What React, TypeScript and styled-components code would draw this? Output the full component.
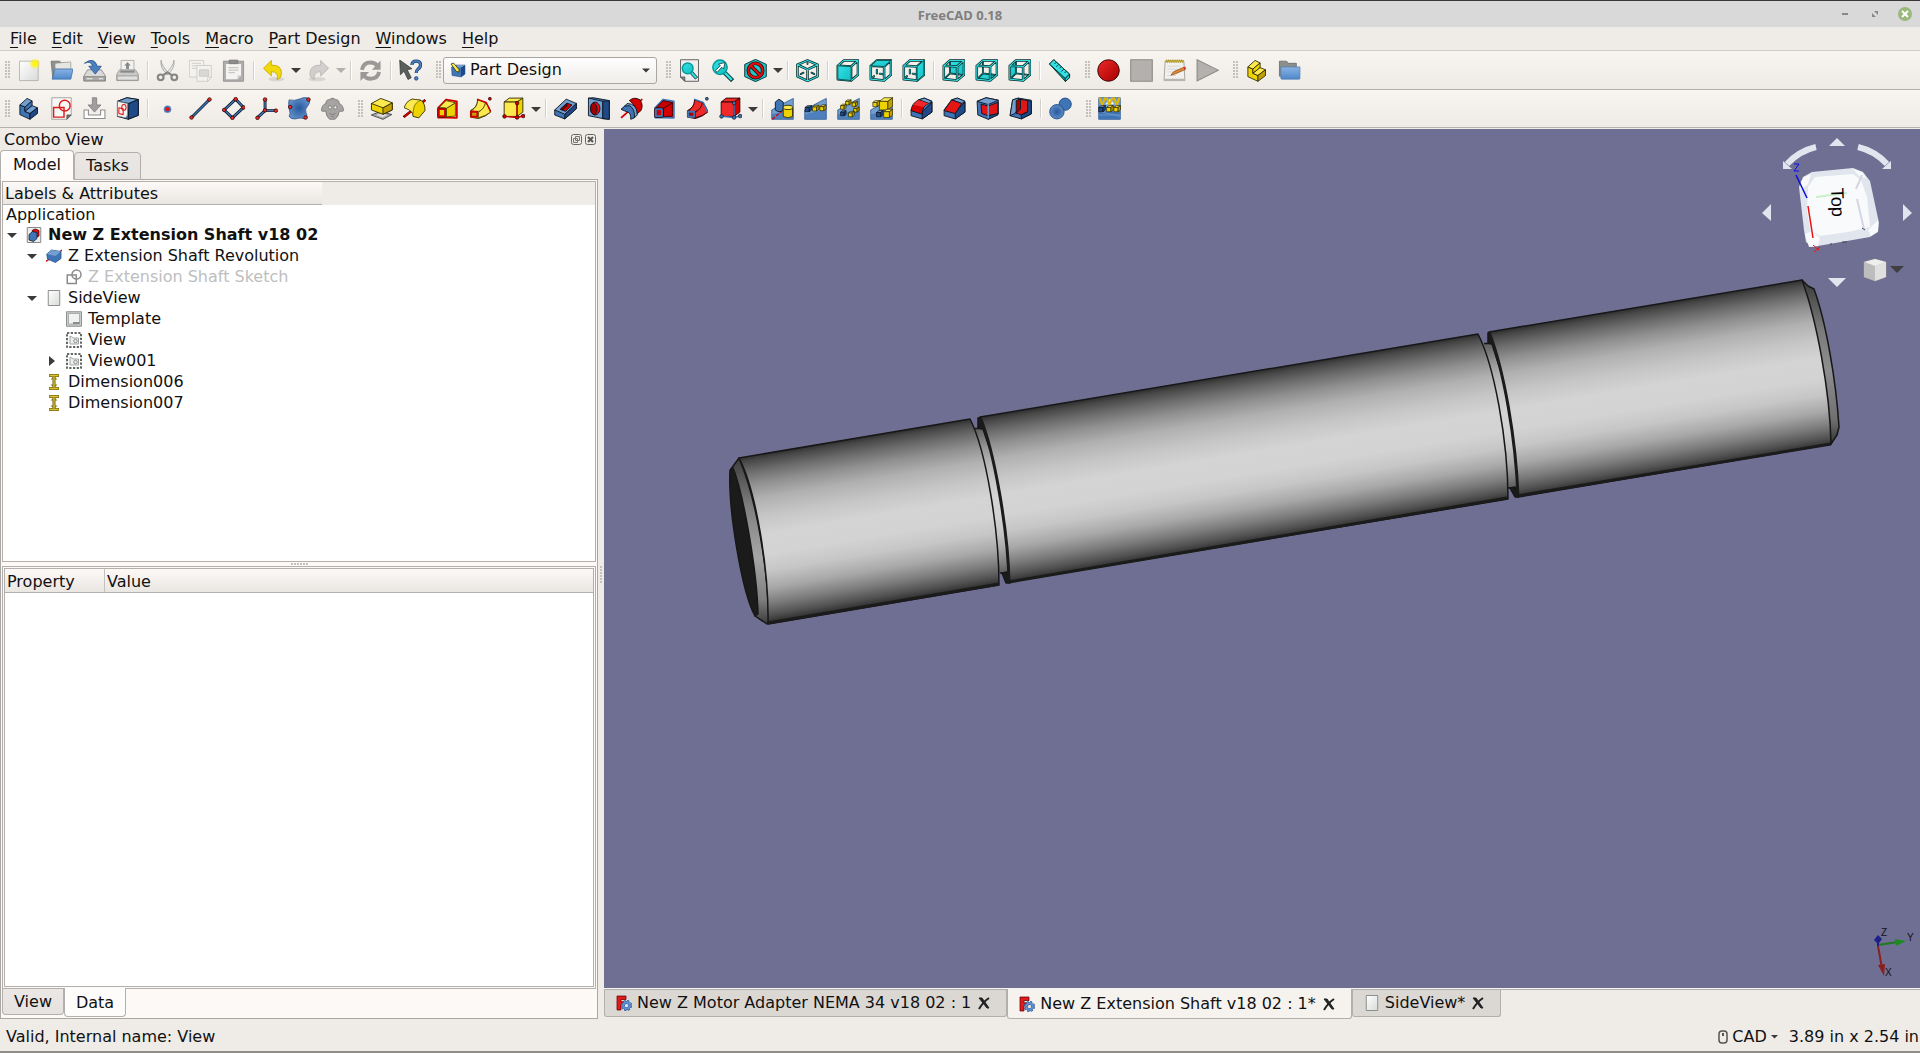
import React from "react";
import styled, { createGlobalStyle, css } from "styled-components";

const Global = createGlobalStyle`
  * { box-sizing: border-box; }
  html, body, #root { height: 100%; margin: 0; }
  body { font: 16px/20px "DejaVu Sans", sans-serif; color: #111; background: #efebe7; overflow: hidden; }
  button, select, input { font: inherit; color: inherit; }
  button { background: none; border: 0; padding: 0; margin: 0; }
  ul { list-style: none; margin: 0; padding: 0; }
`;

/* ---------- colours used by the icon set ---------- */
const BLUE = { hi: "#729fcf", mid: "#3f74b5", lo: "#204a87", line: "#0b1521" };
const GOLD = { hi: "#fce94f", mid: "#edd400", lo: "#c4a000", line: "#302b00" };
const RED = { hi: "#ef2929", mid: "#d40000", lo: "#a40000", line: "#280000" };
const CYAN = { hi: "#34e0e2", mid: "#1fc5c8", lo: "#06989a", line: "#042a2a" };
type Tone = typeof BLUE;

/* ---------- drawing helpers ---------- */
const Wire = ({ d, tone = CYAN, w = 4 }: { d: string; tone?: Tone; w?: number }) => (
  <g fill="none" strokeLinejoin="round" strokeLinecap="round">
    <path d={d} stroke={tone.line} strokeWidth={w + 4} />
    <path d={d} stroke={tone.hi} strokeWidth={w} />
  </g>
);

const Block = ({ x, y, s, t }: { x: number; y: number; s: number; t: Tone }) => {
  const k = s * 0.3;
  return (
    <g stroke={t.line} strokeWidth="2" strokeLinejoin="round">
      <path fill={t.hi} d={`M${x} ${y + k}l${k * 1.3} ${-k}h${s - k}l${-k * 1.3} ${k}z`} />
      <path fill={t.mid} d={`M${x} ${y + k}h${s - k}v${s - k}h${k - s}z`} />
      <path fill={t.lo} d={`M${x + s - k} ${y + k}l${k * 1.3} ${-k}v${s - k}l${-k * 1.3} ${k}z`} />
    </g>
  );
};

const Dot = ({ x, y, r = 5, fill = "#ef2929", line = "#280000" }: { x: number; y: number; r?: number; fill?: string; line?: string }) => (
  <circle cx={x} cy={y} r={r} fill={fill} stroke={line} strokeWidth="2" />
);

const Steps = ({ t }: { t: Tone }) => (
  <g stroke={t.line} strokeWidth="2.5" strokeLinejoin="round">
    <path fill={t.mid} d="M8 22l14 6v12l14 6v16L8 49z" />
    <path fill={t.hi} d="M8 22L28 4l14 7-20 17z" />
    <path fill={t.mid} d="M22 28l20-17v13L22 40z" />
    <path fill={t.hi} d="M22 40l20-16 15 6-21 16z" />
    <path fill={t.lo} d="M36 46l21-16v16L36 62z" />
  </g>
);

const FACES = {
  front: "M5 19L42 21V60L5 56z",
  top: "M5 19L22 4H61L42 21z",
  right: "M42 21L61 4V44L42 60z",
  rear: "M22 4H61V44L22 40z",
  bottom: "M5 56L22 40L61 44L42 60z",
  left: "M5 19L22 4V40L5 56z",
};
const ViewCube = ({ face }: { face: keyof typeof FACES }) => {
  const hidden = face === "rear" || face === "bottom" || face === "left";
  return (
    <g>
      {hidden && <path d={FACES[face]} fill="url(#gCyan)" stroke={CYAN.line} strokeWidth="2" />}
      {!hidden && face !== "front" && <Wire w={2} d="M22 30v10M14 48l-5 5M30 41l8 1" />}
      {hidden && <Wire w={1} d="M22 8v32l-14 14M22 40l34 4" />}
      <Wire w={3} d="M5 19L42 21V60L5 56zM5 19L22 4H61V44L42 60M42 21L61 4" />
      {!hidden && <path d={FACES[face]} fill="url(#gCyan)" stroke={CYAN.line} strokeWidth="2" />}
    </g>
  );
};

const Feature = ({ kind, t, e }: { kind: "revolve" | "loft" | "pipe" | "prim"; t: Tone; e: Tone }) => {
  if (kind === "loft")
    return (
      <g strokeLinejoin="round">
        <path d="M6 30L28 7 58 12V58L28 57H6z" fill={t.hi} stroke={e.mid} strokeWidth="5" />
        <path d="M28 32L54 16v37L28 55z" fill={t.mid} stroke={t.line} strokeWidth="2" />
        <path d="M8 30L28 10l26 6-26 16z" fill={t.hi} stroke={t.line} strokeWidth="2" />
        <path d="M8 34h17v19H8z" fill={t.mid} stroke={t.line} strokeWidth="9" />
        <path d="M8 34h17v19H8z" fill={t.mid} stroke={e.mid} strokeWidth="5" />
      </g>
    );
  if (kind === "pipe")
    return (
      <g strokeLinejoin="round">
        <path d="M24 8l22 8q14 16 14 26-12 12-34 18L4 56V38Q24 28 24 8z" fill={t.mid} stroke={t.line} strokeWidth="2.500" />
        <path d="M24 8l22 8Q44 34 24 42L6 38Q24 28 24 8z" fill={t.hi} stroke={t.line} strokeWidth="2" />
        <path d="M46 16Q42 34 26 42v16q22-6 34-16Q56 26 46 16z" fill={t.hi} stroke={t.line} strokeWidth="2" />
        <path d="M22 6l26 9 12 26" fill="none" stroke={e.mid} strokeWidth="4" />
        <path d="M6 41h17v14H6z" fill={t.lo} stroke={e.mid} strokeWidth="5" />
        <Dot x={58} y={5} r={4} fill={e.mid} line={e.line} />
      </g>
    );
  if (kind === "prim")
    return (
      <g strokeLinejoin="round">
        <path d="M6 14L20 3H58L42 14z" fill={t.hi} stroke={t.line} strokeWidth="2.5" />
        <path d="M6 14H42V54H6z" fill={t.hi} stroke={t.line} strokeWidth="2.5" />
        <path d="M42 14L58 3V42L42 54z" fill={t.mid} stroke={t.line} strokeWidth="2.5" />
        <path d="M42 18V56M7 54l35 3 17-4" fill="none" stroke={e.mid} strokeWidth="4" />
        <Dot x={42} y={17} fill={e.mid} line={e.line} /><Dot x={7} y={54} fill={e.mid} line={e.line} />
        <Dot x={42} y={57} fill={e.mid} line={e.line} /><Dot x={59} y={53} fill={e.mid} line={e.line} />
      </g>
    );
  return (
    <g strokeLinejoin="round">
      <path d="M2 56L62 8" stroke={RED.line} strokeWidth="7" />
      <path d="M3 55L61 9" stroke={e.mid} strokeWidth="5" />
      <path d="M4 30Q8 12 26 6L50 9Q62 18 61 38L44 58 28 54Q28 36 4 30z" fill={t.mid} stroke={t.line} strokeWidth="2.500" />
      <path d="M4 30Q8 12 26 6L50 9Q34 14 30 30 28 40 28 46 20 34 4 30z" fill={t.hi} stroke={t.line} strokeWidth="1.500" />
    </g>
  );
};

const Slab = ({ children }: { children: React.ReactNode }) => (
  <g>
    <path d="M2 62V36L46 12 62 4V62z" fill={BLUE.hi} stroke={BLUE.lo} strokeWidth="2" />
    <path d="M2 62V48L62 34V62z" fill={BLUE.mid} opacity="0.7" />
    {children}
  </g>
);

const Dress = ({ children }: { children: React.ReactNode }) => (
  <g strokeLinejoin="round" stroke={BLUE.line} strokeWidth="2.5">
    <path d="M3 36L24 8 40 3 61 12V42L34 61 3 52z" fill={BLUE.mid} />
    <path d="M24 8l16-5 21 9-9 6z" fill={BLUE.hi} />
    <path d="M34 61V42L61 14v28z" fill={BLUE.lo} />
    {children}
  </g>
);

const ICONS: Record<string, React.ReactNode> = {
  new: <g><path d="M7 6h52v54H7z" fill="url(#gPage)" stroke="#a5a5a0" strokeWidth="2" /><circle cx="50" cy="13" r="14" fill="#fff200" opacity=".45" /><circle cx="50" cy="13" r="8" fill="#fff41a" /></g>,
  open: <g><path d="M3 6h24l4 5h26v14H12L8 56z" fill="#8e908c" stroke="#6b6d69" strokeWidth="2" /><path d="M14 12l44-4v20H14z" fill="#e6e6e3" stroke="#888" strokeWidth="1.5" /><path d="M14 28h50l-6 28H6z" fill="url(#gFolder)" stroke="#3a6fae" strokeWidth="2" /></g>,
  save: <g><path d="M13 30h38l12 18v13H2V48z" fill="#d9dad8" stroke="#777" strokeWidth="2" /><path d="M3 49h59v12H3z" fill="#a9aaa7" stroke="#777" strokeWidth="2" /><path d="M10 55h16M44 55h12" stroke="#eee" strokeWidth="3" /><path d="M4 12Q30-8 40 20h11L34 42 16 20h11Q22 4 4 12z" fill="#4a7fc0" stroke="#204a87" strokeWidth="2" /></g>,
  print: <g><path d="M14 4h36v30H14z" fill="#f1f1f0" stroke="#999" strokeWidth="2" /><path d="M32 8l9 10h-5v10h-8V18h-5z" fill="#888" /><path d="M10 30h44l8 12v18H2V42z" fill="#c9cac8" stroke="#909090" strokeWidth="2" /><path d="M12 32h40v6H12z" fill="#8a8a8a" /><path d="M3 47h58v12H3z" fill="#e0e0de" stroke="#8a8a8a" strokeWidth="2" /></g>,
  cut: <g fill="none"><path d="M14 3q2 18 24 38l-6 2Q10 26 14 3z" fill="#ddd" stroke="#999" strokeWidth="2" /><path d="M50 3q-2 18-24 38l6 2Q54 26 50 3z" fill="#e8e8e6" stroke="#999" strokeWidth="2" /><circle cx="13" cy="51" r="8" stroke="#868686" strokeWidth="6" /><circle cx="51" cy="51" r="8" stroke="#868686" strokeWidth="6" /><path d="M20 45l12-8 12 8" stroke="#868686" strokeWidth="6" /></g>,
  copy: <g fill="#f3f2ef" stroke="#c3c1be" strokeWidth="2"><path d="M1 4h40v46H1z" /><path d="M8 12h26M8 19h26M8 26h12" /><path d="M22 18h40v32L52 62H22z" /><path d="M29 30h26v18H29z" fill="#d9d8d5" /><path d="M52 62V51h10z" fill="#fff" /></g>,
  paste: <g><path d="M4 6h56v56H4z" fill="#aeadab" stroke="#858482" strokeWidth="2" /><path d="M11 14h42v32L43 56H11z" fill="#f4f3f1" /><path d="M18 24h28M18 31h28M18 38h18" stroke="#c8c7c4" strokeWidth="3" /><path d="M43 56V46h10z" fill="#ccc" /><path d="M20 3h24v10H20z" fill="#8d8c8a" stroke="#777" strokeWidth="2" /></g>,
  undo: <g><ellipse cx="40" cy="56" rx="22" ry="6" fill="#000" opacity=".1" /><path d="M4 26L26 4v13Q56 16 54 42 53 54 42 58 48 36 26 35V47z" fill="#f2d90e" stroke="#c9ab00" strokeWidth="2.5" /></g>,
  redo: <g opacity=".8"><ellipse cx="28" cy="56" rx="24" ry="6" fill="#000" opacity=".12" /><path d="M60 26L38 4v13Q8 16 8 42 9 54 20 58 16 36 38 35V47z" fill="#c9c8c6" stroke="#aaa9a7" strokeWidth="2.5" /></g>,
  refresh: <g fill="none" stroke="#9a9997" strokeWidth="11"><path d="M8 30Q12 10 32 10q12 0 18 8" /><path d="M56 36Q52 55 32 55q-12 0-18-8" /><path d="M60 4v26H36z" fill="#9a9997" stroke="none" /><path d="M4 61V36h24z" fill="#9a9997" stroke="none" /></g>,
  help: <g><path d="M2 3l34 24-13 3 11 22-9 5-11-23L4 44z" fill="#5b605c" stroke="#333" strokeWidth="2" /><path d="M36 17Q36 6 48 6t12 11q0 7-8 12-4 3-4 10" fill="none" stroke="#173c70" strokeWidth="9" /><path d="M36 17Q36 6 48 6t12 11q0 7-8 12-4 3-4 10" fill="none" stroke="#4a80c0" strokeWidth="5" /><circle cx="48" cy="54" r="5" fill="#4a80c0" stroke="#173c70" strokeWidth="2" /></g>,
  fitAll: <g><path d="M7 2h50v60H19L7 50z" fill="#eee" stroke="#555" strokeWidth="2.5" /><path d="M7 50h12v12z" fill="#888" stroke="#444" strokeWidth="2" /><path d="M36 36l16 18" stroke={CYAN.line} strokeWidth="10" /><path d="M36 36l15 17" stroke={CYAN.hi} strokeWidth="6" /><circle cx="27" cy="26" r="15" fill="url(#gCyan)" stroke={CYAN.lo} strokeWidth="4" /></g>,
  fitSel: <g><path d="M34 34l26 26" stroke={CYAN.line} strokeWidth="12" /><path d="M34 34l24 24" stroke={CYAN.hi} strokeWidth="7" /><circle cx="25" cy="23" r="20" fill="url(#gCyan)" stroke={CYAN.lo} strokeWidth="4" /><path d="M12 32l14-13-5-5 18-4-4 18-5-5-13 14z" fill="#fff" stroke={CYAN.line} strokeWidth="2" /></g>,
  drawStyle: <g><path d="M32 1l30 14v34L32 63 2 49V15z" fill={CYAN.mid} stroke={CYAN.line} strokeWidth="2.5" /><circle cx="32" cy="32" r="20" fill="none" stroke="#280000" strokeWidth="10" /><path d="M18 18l28 28" stroke="#280000" strokeWidth="10" /><circle cx="32" cy="32" r="20" fill="none" stroke="#e01010" strokeWidth="6" /><path d="M18 18l28 28" stroke="#e01010" strokeWidth="6" /></g>,
  iso: <g><Wire w={1} d="M32 6v8M13 42l8-4M51 42l-8-4" /><Wire w={3} d="M32 4l28 12v32L32 61 4 48V16zM4 16l28 13 28-13M32 29v31" /></g>,
  front: <ViewCube face="front" />, top: <ViewCube face="top" />, right: <ViewCube face="right" />,
  rear: <ViewCube face="rear" />, bottom: <ViewCube face="bottom" />, left: <ViewCube face="left" />,
  measure: <g stroke={CYAN.line} strokeWidth="2.5" strokeLinejoin="round"><path d="M4 14L16 2 60 42v10L48 62z" fill={CYAN.lo} /><path d="M4 14L16 2 60 42 48 54z" fill={CYAN.hi} /><path d="M48 54v9l12-11V42z" fill={CYAN.mid} /><path d="M23 9l-5 5M30 15l-7 7M37 21l-5 5M44 28l-7 7M51 34l-5 5" /></g>,
  record: <circle cx="32" cy="32" r="30" fill="url(#gRed)" stroke="#2b0000" strokeWidth="2.5" />,
  stop: <path d="M2 2h60v60H2z" fill="#b3b0ad" stroke="#8c8a87" strokeWidth="3" />,
  macro: <g><path d="M6 6h52l3 54H3z" fill="#f2f1ee" stroke="#888" strokeWidth="2" /><path d="M3 55h58v6H3z" fill="#b6b6b3" /><path d="M8 3h48v6H8z" fill="#c9b037" stroke="#7a6a10" strokeWidth="2" strokeDasharray="3 3" /><path d="M12 20h36M12 28h28M12 36h18M12 46h24" stroke="#ccc" strokeWidth="2" /><path d="M22 45l8-10 28-12 4 6-27 12z" fill="#e08a3a" stroke="#8a4a10" strokeWidth="2" /><path d="M57 23l5-2 2 6-4 3z" fill="#c33" /></g>,
  play: <path d="M3 2L62 31 3 61z" fill="#b3b0ad" stroke="#8c8a87" strokeWidth="3" />,
  part: <Steps t={GOLD} />,
  group: <g><path d="M4 6h20l5 6h22v36H4z" fill="#8d8f8c" stroke="#5f615e" strokeWidth="2" /><path d="M8 22h53v32q0 2-2 2H11q-3 0-3-2z" fill="url(#gFolder)" stroke="#4b7ab0" strokeWidth="2" /></g>,
  partDesign: <g><path d="M6 20l20-8h34v36L44 60 8 54z" fill={BLUE.mid} stroke={BLUE.lo} strokeWidth="2" /><path d="M44 22l16-10v36L44 60z" fill={BLUE.lo} /><path d="M26 12h34l-16 10H30z" fill={BLUE.hi} /><path d="M4 8l10-4 22 26v10l-10-2z" fill={GOLD.hi} stroke={GOLD.line} strokeWidth="3" /></g>,
  body: <Steps t={BLUE} />,
  sketch: <g><path d="M5 2h54v48L47 62H5z" fill="#f7f7f5" stroke="#888" strokeWidth="2" /><path d="M47 62V50h12z" fill="#777" stroke="#444" strokeWidth="2" /><path d="M10 29h29v27H10z" fill="none" stroke="#e01b1b" strokeWidth="4" /><circle cx="41" cy="24" r="15" fill="none" stroke="#e01b1b" strokeWidth="4" /></g>,
  importSk: <g><path d="M3 36h12v14h34V36h12v24H3z" fill="#fff" stroke="#8e8d8b" strokeWidth="3" /><path d="M26 2h12v20h12L32 42 14 22h12z" fill="#a09f9d" stroke="#777" strokeWidth="2" /></g>,
  mapSk: <g strokeLinejoin="round"><path d="M4 12L30 2l32 5v44L34 62 4 54z" fill={BLUE.mid} stroke={BLUE.line} strokeWidth="2.5" /><path d="M4 12L30 2l32 5-26 11z" fill={BLUE.hi} stroke={BLUE.line} strokeWidth="2.5" /><path d="M36 18L62 7v44L34 62z" fill={BLUE.lo} stroke={BLUE.line} strokeWidth="2.5" /><path d="M4 12l28 6v32l-5 8-23-5z" fill="#f3f3f1" stroke="#777" strokeWidth="2" /><path d="M8 30l12 3v16L8 46z" fill="none" stroke="#e01b1b" strokeWidth="3" /><ellipse cx="22" cy="29" rx="6" ry="8" fill="none" stroke="#e01b1b" strokeWidth="3" /></g>,
  point: <g><circle cx="32" cy="34" r="10" fill={BLUE.mid} stroke={BLUE.hi} strokeWidth="1.5" /><circle cx="32" cy="34" r="5.5" fill="#e81010" /></g>,
  line: <g><Wire tone={{ ...BLUE, hi: BLUE.mid }} w={4} d="M7 57L57 7" /><Dot x={7} y={57} /><Dot x={57} y={7} /></g>,
  plane: <g><Wire tone={{ ...BLUE, hi: BLUE.mid }} w={4} d="M38 6L6 36 29 58 60 29z" /><Dot x={38} y={6} /><Dot x={6} y={36} /><Dot x={29} y={58} /><Dot x={60} y={29} /></g>,
  axes: <g><Wire tone={{ ...BLUE, hi: BLUE.mid }} w={4} d="M28 7v31L6 58M28 38h30" /><Dot x={28} y={7} /><Dot x={28} y={37} /><Dot x={7} y={58} /><Dot x={58} y={38} /></g>,
  binder: <g><path d="M3 8Q18 12 34 5T60 6Q62 18 54 26T50 44Q56 56 48 61 34 56 20 61 8 62 3 54 8 46 4 36 0 20 3 8z" fill="url(#gBlue)" stroke={BLUE.lo} strokeWidth="2" /><Dot x={57} y={7} /><Dot x={6} y={28} /><Dot x={49} y={57} /></g>,
  clone: <g stroke="#6f6e6c" strokeWidth="2"><path d="M1 38Q3 20 14 18 12 8 24 7q8-8 16 0 12 1 10 11 11 2 13 20-4 4-12 1-1 14-12 23H24Q14 54 13 39 5 42 1 38z" fill="#a5a4a2" /><circle cx="25" cy="29" r="4.500" fill="#e8e8e6" /><circle cx="40" cy="29" r="4.500" fill="#e8e8e6" /><path d="M24 46q8 6 16 0M30 54h5" fill="none" /></g>,
  pad: <g strokeLinejoin="round"><path d="M4 50l26-10 30 9-24 13z" fill="#ddd" stroke="#555" strokeWidth="3" /><path d="M12 50l20-6 20 6-17 8z" fill="none" stroke="#888" strokeWidth="2" /><path d="M4 18v18l32 12 26-12V18z" fill={GOLD.mid} stroke={GOLD.line} strokeWidth="2.5" /><path d="M36 30v18l26-12V16z" fill={GOLD.lo} stroke={GOLD.line} strokeWidth="2.5" /><path d="M4 18L30 4l32 12-26 14z" fill={GOLD.hi} stroke={GOLD.line} strokeWidth="2.5" /></g>,
  revolve: <Feature kind="revolve" t={GOLD} e={RED} />, loft: <Feature kind="loft" t={GOLD} e={RED} />,
  pipe: <Feature kind="pipe" t={GOLD} e={RED} />, addPrim: <Feature kind="prim" t={GOLD} e={RED} />,
  pocket: <g strokeLinejoin="round" stroke={BLUE.line} strokeWidth="2.5"><path d="M2 36v14l28 11 32-28V18z" fill={BLUE.mid} /><path d="M30 48v13l32-28V18z" fill={BLUE.lo} /><path d="M2 36L34 6l28 12-32 30z" fill={BLUE.hi} /><path d="M18 34l18-17 14 5-18 18z" fill="#d40000" /><path d="M18 34l18-17v9L22 36z" fill="#8a0000" /></g>,
  hole: <g strokeLinejoin="round" stroke={BLUE.line} strokeWidth="2.5"><path d="M4 3l14-1 44 8v52L42 60z" fill={BLUE.mid} /><path d="M4 3l40 9v48L4 52z" fill={BLUE.hi} /><path d="M44 12l18-2v52l-18-2z" fill={BLUE.lo} /><ellipse cx="23" cy="32" rx="13" ry="18" fill="#e01010" /><path d="M18 15q18 14 4 35-12-2-12-18 0-14 8-17z" fill="#a00000" /></g>,
  grooveI: <g strokeLinejoin="round"><path d="M3 58L62 6" stroke="#d40000" strokeWidth="5" /><path d="M26 10Q40-2 56 8 66 24 58 38L46 48Q46 24 26 10z" fill="#d40000" stroke={RED.line} strokeWidth="2.5" /><path d="M20 18Q48 18 48 50L40 58Q38 30 12 26z" fill={BLUE.hi} stroke={BLUE.line} strokeWidth="2.500" /><path d="M3 34Q12 22 26 24 42 32 40 58L30 62Q30 44 22 42 10 38 3 34z" fill={BLUE.mid} stroke={BLUE.line} strokeWidth="2.500" /></g>,
  subLoft: <Feature kind="loft" t={{ ...RED, hi: "#c40000" }} e={BLUE} />, subPipe: <Feature kind="pipe" t={RED} e={BLUE} />,
  subPrim: <Feature kind="prim" t={RED} e={BLUE} />,
  mirror: <Slab><path d="M4 62L38 32" stroke="#d40000" strokeWidth="4" strokeDasharray="9 5" /><path d="M12 14l10-8 12 8v22q-10 10-22 0z" fill={BLUE.mid} stroke={BLUE.line} strokeWidth="2.500" /><path d="M34 30v24q13 8 26 0V30z" fill={GOLD.mid} stroke={GOLD.line} strokeWidth="2.500" /><ellipse cx="47" cy="29" rx="13" ry="6" fill={GOLD.hi} stroke={GOLD.line} strokeWidth="2.500" /></Slab>,
  linear: <Slab><Block x={3} y={24} s={17} t={{ ...BLUE, hi: BLUE.mid, mid: BLUE.lo }} /><Block x={24} y={23} s={16} t={GOLD} /><Block x={44} y={22} s={16} t={GOLD} /></Slab>,
  polar: <Slab><Block x={24} y={8} s={14} t={GOLD} /><Block x={42} y={12} s={14} t={GOLD} /><Block x={10} y={20} s={14} t={GOLD} /><Block x={46} y={28} s={14} t={GOLD} /><Block x={10} y={38} s={14} t={{ ...BLUE, mid: BLUE.lo }} /><Block x={32} y={40} s={15} t={GOLD} /></Slab>,
  multi: <Slab><Block x={26} y={2} s={34} t={GOLD} /><Block x={8} y={10} s={17} t={GOLD} /><Block x={18} y={38} s={17} t={{ ...BLUE, mid: BLUE.lo }} /><Block x={38} y={34} s={23} t={GOLD} /></Slab>,
  fillet: <Dress><path d="M3 38Q4 18 24 8l28 10Q34 24 34 48z" fill="#d40000" /><path d="M10 22q6-10 14-14l28 10q-10 4-14 10z" fill="#ef2929" stroke="none" /></Dress>,
  chamfer: <Dress><path d="M3 38L24 8l28 10-18 28z" fill="#e81515" /></Dress>,
  draft: <g strokeLinejoin="round" stroke={BLUE.line} strokeWidth="2.5"><path d="M3 12L28 2l34 7v38L34 62 5 50z" fill={BLUE.mid} /><path d="M3 12L28 2l34 7-28 12z" fill={BLUE.hi} /><path d="M14 20l20 5 27-10v32L34 52 16 46z" fill="#e01515" /><path d="M34 52l27-6v4L34 62z" fill={BLUE.lo} /><path d="M34 20v40" stroke={BLUE.hi} strokeWidth="4" /></g>,
  thickness: <g strokeLinejoin="round" stroke={BLUE.line} strokeWidth="2.5"><path d="M3 52L10 8l16-5 36 6v38L34 61z" fill={BLUE.mid} /><path d="M3 52L10 8l16-5v30L16 46z" fill={BLUE.hi} /><path d="M20 10l12-4v30L20 46z" fill="#a40000" /><path d="M32 6l20 4v30L34 50 20 44l12-10z" fill="#e01515" /><path d="M52 10l10 2v35L34 61V50l18-8z" fill={BLUE.lo} /></g>,
  boolean: <g stroke={BLUE.lo} strokeWidth="2.5"><circle cx="45" cy="20" r="17" fill={BLUE.mid} /><circle cx="22" cy="41" r="20" fill="url(#gBlue)" /></g>,
  wizard: <g><path d="M2 2h60v60H2z" fill={BLUE.hi} stroke={BLUE.lo} strokeWidth="2" /><path d="M20 20l14-16 12 16z" fill="#eef" /><path d="M2 40h60v22H2z" fill={BLUE.mid} /><path d="M2 40l60 14M2 50h60" stroke={BLUE.hi} strokeWidth="2" /><path d="M4 2l8 20 8-20M24 2l8 20 8-20M44 2l8 20 8-20" fill="none" stroke="#e0b800" strokeWidth="6" /><Block x={2} y={24} s={17} t={{ ...BLUE, mid: BLUE.lo }} /><Block x={24} y={24} s={17} t={GOLD} /><Block x={44} y={24} s={17} t={GOLD} /></g>,
  docRoot: <g><path d="M5 2h54v60H5z" fill="#eceeee" stroke="#888" strokeWidth="4" /><path d="M24 14q12-12 28 0v22l-18 8z" fill="#e01010" stroke="#500" strokeWidth="3" /><path d="M12 30l14-12 18 4v24L30 58 12 52z" fill={BLUE.mid} stroke={BLUE.line} strokeWidth="3" /></g>,
  revBlue: <g strokeLinejoin="round"><path d="M0 54L64 8" stroke="#e01010" strokeWidth="6" /><path d="M3 24L22 8l38 6v28L38 58 6 44z" fill={BLUE.mid} stroke={BLUE.lo} strokeWidth="3" /><path d="M3 24L22 8l38 6-22 18z" fill={BLUE.hi} /></g>,
  skGrey: <g fill="none" stroke="#8b8b8b" strokeWidth="6"><path d="M5 24h36v34H5z" /><circle cx="42" cy="22" r="18" /></g>,
  page: <path d="M9 2h46v60H9z" fill="url(#gPage)" stroke="#8a8f8c" strokeWidth="4" />,
  template: <g><path d="M2 3h60v58H2z" fill="#c9cccb" stroke="#8d908e" strokeWidth="4" /><path d="M10 10h44v42H10z" fill="#f0f1f0" stroke="#9a9d9b" strokeWidth="3" /><path d="M28 44h26v8H28z" fill="#888c8a" /></g>,
  viewI: <g fill="none"><path d="M4 4h56v56H4z" stroke="#2f3432" strokeWidth="6" strokeDasharray="9 6" /><path d="M16 48V16l14 8h20v24z" stroke="#a0a5a2" strokeWidth="4" fill="#eef0ee" /><circle cx="38" cy="36" r="7" stroke="#8a8f8c" strokeWidth="4" /></g>,
  dim: <g><path d="M12 6h40M12 58h40" stroke="#7a6c10" strokeWidth="12" /><path d="M32 8v48" stroke="#6a5c10" strokeWidth="12" /><path d="M18 22l14-14 14 14zM18 42l14 14 14-14z" fill="#8a7a10" /><path d="M32 10v44" stroke="#d8c238" strokeWidth="5" /><path d="M14 6h36M14 58h36" stroke="#d8c238" strokeWidth="6" /></g>,
  freecad: <g><path d="M4 4h36v14H20v9h16v12H20v21H4z" fill="#e01b1b" stroke="#600" strokeWidth="3" /><circle cx="42" cy="42" r="17" fill="none" stroke="#204a87" strokeWidth="10" strokeDasharray="8 5.350" /><circle cx="42" cy="42" r="12" fill="none" stroke="#204a87" strokeWidth="11" /><circle cx="42" cy="42" r="16" fill="none" stroke="#5d8fd0" strokeWidth="8" strokeDasharray="6 6.560" /><circle cx="42" cy="42" r="12" fill="none" stroke="#5d8fd0" strokeWidth="8" /><circle cx="42" cy="42" r="6" fill="#e8e6e3" /></g>,
};

const Svg = styled.svg<{ $size: number }>`
  flex: none; display: block; width: ${(p) => p.$size}px; height: ${(p) => p.$size}px;
`;
const Icon = ({ name, size = 23 }: { name: string; size?: number }) => (
  <Svg $size={size} viewBox="0 0 64 64" aria-hidden="true">{ICONS[name]}</Svg>
);

/* ---------- frame ---------- */
const Window = styled.div`
  height: 100vh; display: flex; flex-direction: column; border-bottom: 2px solid #8f8b88;
`;
const TitleBar = styled.header`
  flex: none; height: 27px; display: grid; grid-template-columns: 1fr auto 1fr; align-items: center;
  background: #d9d9d9; border-top: 1px solid #3a363a;
`;
const Title = styled.h1`
  grid-column: 2; margin: 0; padding-top: 2px; color: #7f7f7f; font: bold 13px/20px "Noto Sans", sans-serif;
`;
const WindowButtons = styled.div` justify-self: end; display: flex; gap: 16px; padding-right: 8px; `;
const WinBtn = styled.button` width: 14px; height: 14px; svg { display: block; } `;

const MenuBar = styled.nav`
  flex: none; height: 24px; display: flex; gap: 1px; padding-left: 3px; border-bottom: 1px solid #cfccc8;
`;
const MenuItem = styled.button`
  padding: 0 7px; line-height: 22px;
  &::first-letter { text-decoration: underline; text-underline-offset: 3px; text-decoration-thickness: 1px; }
`;

const ToolRow = styled.div<{ $h: number }>`
  flex: none; height: ${(p) => p.$h}px; display: flex; align-items: stretch; gap: 4px;
  background: linear-gradient(#f8f5f1, #eeebe6); border-bottom: 1px solid #b3afac;
`;
const ToolGroup = styled.div` display: flex; align-items: center; `;
const dots = css`
  background-image: radial-gradient(circle at 1px 1px, #c4c0bd 1px, transparent 1px); background-size: 3px 3px;
`;
const Grip = styled.span` width: 5px; height: 18px; margin: 0 2px 0 5px; ${dots} `;
const ToolBtn = styled.button` width: 33px; height: 33px; display: grid; place-items: center; `;
const DropBtn = styled.button<{ $off?: boolean }>`
  width: 12px; height: 33px; display: grid; place-items: center; opacity: ${(p) => (p.$off ? 0.35 : 1)};
`;
const Sep = styled.span` width: 2px; height: 19px; margin: 0 2px 0 3px; background: #d3cfcb; border-right: 1px solid #fff; `;

const Combo = styled.label`
  width: 214px; height: 27px; display: flex; align-items: center; gap: 4px; padding: 0 6px 0 6px;
  border: 1px solid #a9a5a1; border-radius: 3px; background: linear-gradient(#fefefe, #f0edea);
`;
const Select = styled.select`
  flex: 1; min-width: 0; appearance: none; border: 0; padding: 0; background: transparent; outline: 0;
`;

const Caret = ({ w = 10, right }: { w?: number; right?: boolean }) => (
  <svg width={w} height={w} viewBox="0 0 10 10" aria-hidden="true">
    <path d={right ? "M2 0l6 5-6 5z" : "M0 3h10L5 8z"} fill="#3b3b3b" />
  </svg>
);

const Tools = ({ items }: { items: string[] }) => (
  <>
    {items.map((it, i) => {
      if (it === "|") return <Sep key={i} />;
      if (it === "v" || it === "v-") return <DropBtn key={i} $off={it === "v-"} aria-label="More"><Caret /></DropBtn>;
      return <ToolBtn key={i} aria-label={it}><Icon name={it} /></ToolBtn>;
    })}
  </>
);
const Group = ({ items, children }: { items?: string; children?: React.ReactNode }) => (
  <ToolGroup role="toolbar"><Grip />{items && <Tools items={items.split(" ")} />}{children}</ToolGroup>
);

/* ---------- dock ---------- */
const Main = styled.main` flex: 1; min-height: 0; display: flex; padding-top: 1px; `;
const Dock = styled.aside` flex: 0 0 598px; display: flex; flex-direction: column; min-height: 0; `;
const DockTitle = styled.div` height: 21px; display: flex; align-items: center; padding: 0 2px 0 4px; gap: 3px; `;
const DockName = styled.h2` flex: 1; margin: 0; font: inherit; `;
const DockBtn = styled.button` width: 11px; height: 11px; svg { display: block; } `;
const TabRow = styled.div<{ $bottom?: boolean }>`
  flex: none; display: flex; position: relative; z-index: 1;
  align-items: ${(p) => (p.$bottom ? "flex-start" : "flex-end")};
  ${(p) => (p.$bottom ? "height: 28px;" : "height: 30px; margin-bottom: -1px;")}
`;
const Tab = styled.button<{ $on?: boolean; $bottom?: boolean }>`
  padding: 0 11px; border: 1px solid #b3afac; background: linear-gradient(#ebe7e4, #e6e2df);
  ${(p) => (p.$bottom ? "border-top: 0; border-radius: 0 0 4px 4px; height: 26px;" : "border-radius: 4px 4px 0 0; height: 28px;")}
  ${(p) => p.$on && (p.$bottom
    ? "background: #fefcfa; height: 29px; margin-top: -1px; padding-top: 2px;"
    : "background: #fefcfa; height: 30px; border-bottom-color: #fefcfa; padding: 0 12px;")}
`;
const Pane = styled.section`
  flex: 1; min-height: 0; display: flex; flex-direction: column; padding: 1px;
  border: 1px solid #aaa6a3; background: #fcf9f6;
`;
const Frame = styled.div<{ $grow: number }>`
  flex: ${(p) => p.$grow} 1 0; min-height: 0; display: flex; flex-direction: column;
  border: 1px solid #b3afac; background: #fff;
`;
const PropWrap = styled(Frame)` padding: 1px; background: #fcf9f6; `;
const TreeHead = styled.div` height: 23px; background: #efebe7; `;
const TreeHeadCell = styled.div`
  width: 319px; height: 23px; padding-left: 2px; line-height: 23px;
  background: linear-gradient(#fcf9f7, #eae6e2); border-bottom: 1px solid #b3afac;
`;
const RootLabel = styled.div` height: 19px; padding-left: 3px; line-height: 20px; `;
const Row = styled.li<{ $level: number; $bold?: boolean; $dim?: boolean }>`
  height: 21px; display: flex; align-items: center; white-space: nowrap;
  padding-left: ${(p) => p.$level * 20}px;
  font-weight: ${(p) => (p.$bold ? "bold" : "normal")};
  color: ${(p) => (p.$dim ? "#bebebe" : "#111")};
`;
const Expander = styled.span` width: 23px; padding-left: 4px; display: flex; `;
const RowText = styled.span` padding-left: 6px; `;
const HSplit = styled.div` flex: none; height: 4px; display: grid; place-items: center; `;
const HDots = styled.span` width: 17px; height: 2px; ${dots} `;
const VSplit = styled.div` flex: 0 0 6px; display: grid; place-items: center; `;
const VDots = styled.span` width: 2px; height: 17px; ${dots} `;

const PropTable = styled.table`
  width: 100%; border-collapse: separate; border-spacing: 0; table-layout: fixed;
  th {
    height: 24px; padding: 2px 0 0 2px; text-align: left; font-weight: normal; line-height: 20px;
    background: linear-gradient(#fcf9f7, #eae6e2); border-bottom: 1px solid #b3afac;
  }
  th:first-child { width: 100px; border-right: 1px solid #c5c1be; }
`;

/* ---------- 3D area ---------- */
const Area = styled.section` flex: 1; min-width: 0; display: flex; flex-direction: column; `;
const View3D = styled.div` flex: 1; min-height: 0; position: relative; background: #6f6f93; overflow: hidden; `;
const Scene = styled.svg` display: block; width: 100%; height: 100%; `;
const NavCube = styled.svg` position: absolute; top: 0; right: 0; width: 160px; height: 165px; `;
const AxisCross = styled.svg` position: absolute; right: 0; bottom: 0; width: 50px; height: 68px; `;
const DocTabs = styled.div`
  flex: none; height: 31px; display: flex; align-items: flex-start; border-top: 1px solid #f7f5f3;
  background: linear-gradient(#b3afac 1px, transparent 1px);
`;
const DocTab = styled.div<{ $on?: boolean }>`
  display: flex; align-items: center; height: ${(p) => (p.$on ? 30 : 28)}px; padding: 0 15px 0 11px;
  border: 1px solid #b3afac; border-top: 0; border-radius: 0 0 3px 3px;
  ${(p) => (p.$on ? "background: #f6f3ef;" : "background: linear-gradient(#b3afac 1px, #dbd8d4 1px);")}
`;
const DocName = styled.button` margin: 0 6px 0 5px; white-space: nowrap; `;
const CloseBtn = styled.button` width: 14px; height: 14px; svg { display: block; } `;

const Status = styled.footer`
  flex: none; height: 32px; display: flex; align-items: center; padding: 3px 1px 0 6px;
`;
const StatusText = styled.span` flex: 1; `;
const NavStyle = styled.button` display: flex; align-items: center; gap: 4px; margin-right: 11px; `;

const TREE = [
  { t: "New Z Extension Shaft v18 02", icon: "docRoot", level: 0, open: true, bold: true },
  { t: "Z Extension Shaft Revolution", icon: "revBlue", level: 1, open: true },
  { t: "Z Extension Shaft Sketch", icon: "skGrey", level: 2, dim: true },
  { t: "SideView", icon: "page", level: 1, open: true },
  { t: "Template", icon: "template", level: 2 },
  { t: "View", icon: "viewI", level: 2 },
  { t: "View001", icon: "viewI", level: 2, open: false, closed: true },
  { t: "Dimension006", icon: "dim", level: 1 },
  { t: "Dimension007", icon: "dim", level: 1 },
];

const DOCS = [
  { t: "New Z Motor Adapter NEMA 34 v18 02 : 1", icon: "freecad" },
  { t: "New Z Extension Shaft v18 02 : 1*", icon: "freecad", on: true },
  { t: "SideView*", icon: "page" },
];

const DefsSvg = styled.svg` display: block; width: 0; height: 0; `;
const Defs = () => (
  <DefsSvg aria-hidden="true">
    <defs>
      <linearGradient id="gPage" x2="1" y2="1"><stop stopColor="#fff" /><stop offset="1" stopColor="#d8dbd8" /></linearGradient>
      <linearGradient id="gFolder" x2="0" y2="1"><stop stopColor="#8ab4e3" /><stop offset="1" stopColor="#4f87cb" /></linearGradient>
      <linearGradient id="gCyan" x2="1" y2="1"><stop stopColor="#34e0e2" /><stop offset="1" stopColor="#10c0c4" /></linearGradient>
      <linearGradient id="gRed" x2="1" y2="1"><stop stopColor="#ef2929" /><stop offset="1" stopColor="#a40000" /></linearGradient>
      <radialGradient id="gBlue"><stop stopColor="#27589c" /><stop offset="1" stopColor="#5d8cc6" /></radialGradient>
    </defs>
  </DefsSvg>
);

const Shaft = () => (
  <Scene viewBox="604 129 1316 859" role="img" aria-label="Extension shaft model">
    <defs>
      <linearGradient id="metal" gradientUnits="userSpaceOnUse" x1="739" y1="457.500" x2="766.500" y2="622">
        <stop offset="0" stopColor="#2e2e2e" /><stop offset=".03" stopColor="#484848" />
        <stop offset=".09" stopColor="#6a6a6a" /><stop offset=".17" stopColor="#909090" />
        <stop offset=".26" stopColor="#b0b0b0" /><stop offset=".37" stopColor="#c6c6c6" />
        <stop offset=".48" stopColor="#d4d4d4" /><stop offset=".6" stopColor="#d3d3d3" />
        <stop offset=".7" stopColor="#c6c6c6" /><stop offset=".8" stopColor="#a8a8a8" />
        <stop offset=".89" stopColor="#7c7c7c" /><stop offset=".96" stopColor="#525252" />
        <stop offset="1" stopColor="#333" />
      </linearGradient>
      <linearGradient id="chamL" x2="0" y2="1">
        <stop stopColor="#3c3c3c" /><stop offset=".3" stopColor="#808080" /><stop offset=".6" stopColor="#a6a6a6" />
        <stop offset=".85" stopColor="#808080" /><stop offset="1" stopColor="#3a3a3a" />
      </linearGradient>
      <linearGradient id="chamR" x2="0" y2="1">
        <stop stopColor="#3a3a3a" /><stop offset=".3" stopColor="#7a7a7a" /><stop offset=".55" stopColor="#8e8e8e" />
        <stop offset=".85" stopColor="#707070" /><stop offset="1" stopColor="#333" />
      </linearGradient>
    </defs>
    <g stroke="#171717" strokeWidth="1.500" strokeLinejoin="round">
      {/* chamfered ends */}
      <path fill="url(#chamL)" d="M731 469L739 458C757 500 768 570 769 622L767 624L755 616z" />
      <path fill="#1b1b1b" d="M730 470C728 510 742 592 755 616L758 614C757 570 743 492 733 468z" />
      <path fill="url(#chamR)" d="M1802 280L1808 286 1814 289C1826 322 1836 380 1839 427L1837 435 1831 444z" />
      {/* groove floors */}
      <path fill="url(#metal)" stroke="none" d="M975 428L984 428C998 470 1007 530 1007 573L999 573z" />
      <path fill="url(#metal)" stroke="none" d="M1484 343L1493 343C1507 390 1516 450 1516 488L1507 488z" />
      <path fill="none" d="M975 428.500h8M1484 343.500h8M1000 573h6M1508 488h6" />
      <path fill="#1b1b1b" d="M978 418L984 417 990 450 983 429 978 428zM1488 333L1493 332 1499 366 1492 344 1488 343z" />
      <path fill="#1b1b1b" d="M1002 573L1007 572 1010 583 1006 583zM1510 488L1515 487 1518 497 1515 497z" />
      {/* cylindrical sections */}
      <path fill="url(#metal)" d="M739 458L970 419C986 450 999 530 999 585L768 624C769 570 756 490 739 458z" />
      <path fill="url(#metal)" d="M980 417L1478 334C1494 365 1508 440 1508 499L1009 582C1008 530 994 450 980 417z" />
      <path fill="url(#metal)" d="M1489 332L1802 280C1816 318 1830 390 1831 444L1518 497C1516 440 1504 370 1489 332z" />
    </g>
    <g fill="none" stroke="#1b1b1b" strokeWidth="3">
      <path d="M980 417C994 450 1008 530 1009 582M1489 332C1504 370 1516 440 1518 497" />
      <path d="M768 623L999 584M1009 582L1507 498M1517 496L1831 444" />
    </g>
  </Scene>
);

const Navigation = () => (
  <NavCube viewBox="1760 129 160 165" role="img" aria-label="Navigation cube">
    <g fill="#e1e6ee">
      <path d="M1829 146h16l-8-8zM1828 278h18l-9 9zM1771 204v17l-9-8zM1903 204v17l9-8z" />
      <path d="M1783 161v8h9zM1891 161v8h-9z" />
      <path d="M1816 147Q1799 151 1787 164M1858 147Q1875 151 1887 164" fill="none" stroke="#e1e6ee" strokeWidth="6" />
      <path d="M1799 187L1803 177 1812 172 1853 168 1863 172 1870 181 1879 223 1878 232 1870 237 1812 247 1806 242 1804 230z" />
    </g>
    <g fill="#f8fafc">
      <path d="M1808 187L1815 177 1853 174 1861 180 1867 197 1870 227 1848 232 1820 236 1810 230 1807 210z" />
      <path d="M1800 184L1804 177 1811 174 1808 184 1801 190zM1853 169L1862 172 1866 178 1860 177zM1868 230L1878 220 1878 231 1871 236zM1805 234L1812 231 1820 238 1818 246 1809 247z" />
    </g>
    <path d="M1816 197l31-4" stroke="#c9f0c9" strokeWidth="2" />
    <path d="M1856 189l6-14M1857 199l7 30" stroke="#d5d6e2" strokeWidth="2" fill="none" />
    <path d="M1796 175l11 23" stroke="#0a0ae0" strokeWidth="1.500" />
    <path d="M1808 206l5 32" stroke="#e81010" strokeWidth="1.500" />
    <path d="M1862 228l3 2M1830 244h2M1842 242h5" stroke="#445" />
    <path d="M1794 164h5l-5 7h5" stroke="#0a0af0" fill="none" />
    <path d="M1813 245l6 5M1820 247l-6 5" stroke="#f01010" fill="none" />
    <text transform="translate(1831 188) rotate(88)" fontFamily="Liberation Sans, sans-serif" fontSize="18">Top</text>
    <g stroke="#8a8a8a">
      <path d="M1864 262l11-3 11 3v15l-11 4-11-4z" fill="#cfcfcf" />
      <path d="M1864 262l11-3 11 3-11 4z" fill="#eee" stroke="none" />
      <path d="M1875 266l11-4v15l-11 4z" fill="#e0e0e0" stroke="none" />
      <path d="M1864 262l11 4v15l-11-4z" fill="#bdbdbd" stroke="none" />
    </g>
    <path d="M1890 266h14l-7 7z" fill="#3f3f3f" />
  </NavCube>
);

const Axes = () => (
  <AxisCross viewBox="1870 920 50 68" role="img" aria-label="Axis cross">
    <path d="M1878 945l20-3" stroke="#1f7a1f" strokeWidth="2" /><path d="M1895 939l11 2-10 5z" fill="#1f8a1f" />
    <path d="M1878 946l4 22" stroke="#8a1f1f" strokeWidth="2" /><path d="M1878 965l7-1-1 12z" fill="#8a1f1f" />
    <path d="M1874 940l4-5 4 4-3 4v3h-2v-3z" fill="#1f1f8a" />
    <g fontFamily="Liberation Sans, sans-serif" fontSize="10" fill="#111">
      <text x="1881" y="936">Z</text><text x="1907" y="941">Y</text><text x="1885" y="976">X</text>
    </g>
  </AxisCross>
);

export default function App() {
  return (
    <Window>
      <Global />
      <Defs />
      <TitleBar>
        <Title>FreeCAD 0.18</Title>
        <WindowButtons>
          <WinBtn aria-label="Minimize"><svg viewBox="0 0 14 14"><path d="M4 7h6" stroke="#888" strokeWidth="2" /></svg></WinBtn>
          <WinBtn aria-label="Restore"><svg viewBox="0 0 14 14"><path d="M6 4h4v4zM4 6v4h4z" fill="#888" /></svg></WinBtn>
          <WinBtn aria-label="Close window"><svg viewBox="0 0 14 14"><circle cx="7" cy="7" r="7" fill="#9ab87c" /><path d="M4 4l6 6M10 4l-6 6" stroke="#fff" strokeWidth="2" /></svg></WinBtn>
        </WindowButtons>
      </TitleBar>
      <MenuBar>
        {["File", "Edit", "View", "Tools", "Macro", "Part Design", "Windows", "Help"].map((m) => <MenuItem key={m}>{m}</MenuItem>)}
      </MenuBar>
      <ToolRow $h={39}>
        <Group items="new open save print | cut copy paste | undo v redo v- | refresh | help" />
        <Group>
          <Combo>
            <Icon name="partDesign" size={16} />
            <Select aria-label="Workbench"><option>Part Design</option></Select>
            <Caret w={8} />
          </Combo>
        </Group>
        <Group items="fitAll fitSel drawStyle v | iso | front top right | rear bottom left | measure" />
        <Group items="record stop macro play" />
        <Group items="part group" />
      </ToolRow>
      <ToolRow $h={38}>
        <Group items="body sketch importSk mapSk | point line plane axes binder clone" />
        <Group items="pad revolve loft pipe addPrim v | pocket hole grooveI subLoft subPipe subPrim v | mirror linear polar multi | fillet chamfer draft thickness | boolean" />
        <Group items="wizard" />
      </ToolRow>
      <Main>
        <Dock>
          <DockTitle>
            <DockName>Combo View</DockName>
            <DockBtn aria-label="Float"><svg viewBox="0 0 11 11"><rect x=".5" y=".5" width="10" height="10" rx="2" fill="none" stroke="#666" /><path d="M4.500 2.500h4v4h-4zM2.500 4.500h4v4h-4z" fill="none" stroke="#777" /></svg></DockBtn>
            <DockBtn aria-label="Close panel"><svg viewBox="0 0 11 11"><rect x=".5" y=".5" width="10" height="10" rx="2" fill="none" stroke="#666" /><path d="M3 3l5 5M8 3L3 8" stroke="#555" strokeWidth="2" /></svg></DockBtn>
          </DockTitle>
          <TabRow role="tablist">
            <Tab $on role="tab">Model</Tab>
            <Tab role="tab">Tasks</Tab>
          </TabRow>
          <Pane>
            <Frame $grow={382}>
              <TreeHead><TreeHeadCell>Labels &amp; Attributes</TreeHeadCell></TreeHead>
              <RootLabel>Application</RootLabel>
              <ul>
                {TREE.map((n) => (
                  <Row key={n.t} $level={n.level} $bold={n.bold} $dim={n.dim}>
                    <Expander>{n.open && <Caret />}{n.closed && <Caret right />}</Expander>
                    <Icon name={n.icon} size={16} />
                    <RowText>{n.t}</RowText>
                  </Row>
                ))}
              </ul>
            </Frame>
            <HSplit><HDots /></HSplit>
            <PropWrap $grow={422}>
              <Frame $grow={1}>
                <PropTable><thead><tr><th>Property</th><th>Value</th></tr></thead></PropTable>
              </Frame>
            </PropWrap>
            <TabRow $bottom role="tablist">
              <Tab $bottom role="tab">View</Tab>
              <Tab $bottom $on role="tab">Data</Tab>
            </TabRow>
          </Pane>
        </Dock>
        <VSplit><VDots /></VSplit>
        <Area>
          <View3D><Shaft /><Navigation /><Axes /></View3D>
          <DocTabs>
            {DOCS.map((d) => (
              <DocTab key={d.t} $on={d.on}>
                <Icon name={d.icon} size={16} />
                <DocName>{d.t}</DocName>
                <CloseBtn aria-label={"Close " + d.t}>
                  <svg viewBox="0 0 14 14"><path d="M2 2h3l7 10h-2z" fill="#222" stroke="#222" /><path d="M12 2Q6 6 2 13" fill="none" stroke="#222" strokeWidth="2" /></svg>
                </CloseBtn>
              </DocTab>
            ))}
          </DocTabs>
        </Area>
      </Main>
      <Status>
        <StatusText>Valid, Internal name: View</StatusText>
        <NavStyle>
          <svg width="10" height="14" viewBox="0 0 10 14"><rect x="1" y="1" width="8" height="12" rx="3" fill="none" stroke="#555" strokeWidth="1.500" /><path d="M5 3v3" stroke="#555" strokeWidth="2" /></svg>
          CAD
          <Caret w={7} />
        </NavStyle>
        <span>3.89 in x 2.54 in</span>
      </Status>
    </Window>
  );
}
